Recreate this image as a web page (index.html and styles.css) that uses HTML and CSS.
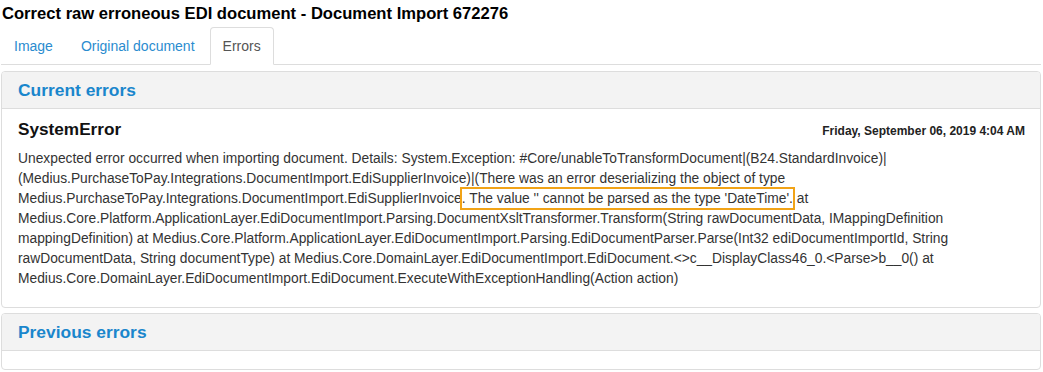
FILE: index.html
```html
<!DOCTYPE html>
<html>
<head>
<meta charset="utf-8">
<link rel="stylesheet" href="styles.css">
</head>
<body>
<div class="page">
  <h1 class="title">Correct raw erroneous EDI document - Document Import 672276</h1>
  <ul class="tabs">
    <li class="tab"><a>Image</a></li>
    <li class="tab"><a>Original document</a></li>
    <li class="tab active"><a>Errors</a></li>
  </ul>
  <div class="panel">
    <div class="panel-head">Current errors</div>
    <div class="panel-body">
      <div class="err-head">
        <span class="err-name">SystemError</span>
        <span class="err-date">Friday, September 06, 2019 4:04 AM</span>
      </div>
      <p class="err-text">Unexpected error occurred when importing document. Details: System.Exception: #Core/unableToTransformDocument|(B24.StandardInvoice)| (Medius.PurchaseToPay.Integrations.DocumentImport.EdiSupplierInvoice)|(There was an error deserializing the object of type Medius.PurchaseToPay.Integrations.DocumentImport.EdiSupplierInvoice<span class="hl">. The value '' cannot be parsed as the type 'DateTime'.</span> at Medius.Core.Platform.ApplicationLayer.EdiDocumentImport.Parsing.DocumentXsltTransformer.Transform(String rawDocumentData, IMappingDefinition mappingDefinition) at Medius.Core.Platform.ApplicationLayer.EdiDocumentImport.Parsing.EdiDocumentParser.Parse(Int32 ediDocumentImportId, String rawDocumentData, String documentType) at Medius.Core.DomainLayer.EdiDocumentImport.EdiDocument.&lt;&gt;c__DisplayClass46_0.&lt;Parse&gt;b__0() at Medius.Core.DomainLayer.EdiDocumentImport.EdiDocument.ExecuteWithExceptionHandling(Action action)</p>
    </div>
  </div>
  <div class="panel second">
    <div class="panel-head">Previous errors</div>
    <div class="panel-body empty"></div>
  </div>
</div>
</body>
</html>
```
FILE: styles.css
```css
html, body { margin: 0; padding: 0; background: #fff; }
body { font-family: "Liberation Sans", Arial, sans-serif; color: #333; }
.page { padding: 0 2px 0 1px; }
.title {
  margin: 0; padding: 2px 0 0 1px;
  font-size: 16.6px; line-height: 24px; font-weight: bold; color: #000;
}
.tabs {
  list-style: none; margin: 1px 0 0 0; padding: 0;
  display: flex; border-bottom: 1px solid #ddd;
}
.tab { margin-right: 2px; margin-bottom: -1px; }
.tab a {
  display: block; padding: 8px 12px; line-height: 20px; font-size: 14px;
  color: #2a8ccf; border: 1px solid transparent; border-radius: 4px 4px 0 0;
}
.tab.active a { color: #555; background: #fff; border-color: #ddd #ddd transparent #ddd; }
.panel {
  margin-top: 6px; border: 1px solid #ddd; border-radius: 4px; background: #fff;
}
.panel.second { margin-top: 5px; }
.panel-head {
  background: #f3f3f3; border-bottom: 1px solid #ddd; border-radius: 3px 3px 0 0;
  padding: 8px 16px; line-height: 20px; font-size: 17.4px; font-weight: bold; color: #1a86cc;
}
.panel-body { padding: 10px 15px 18px 16px; }
.panel-body.empty { padding: 0; height: 18px; }
.err-head { display: flex; justify-content: space-between; align-items: baseline; }
.err-name { font-size: 17.2px; font-weight: bold; color: #111; line-height: 20px; }
.err-date { font-size: 12px; font-weight: bold; color: #222; }
.err-text { margin: 10px 0 0 0; font-size: 13.8px; line-height: 20px; color: #333; }
.hl { outline: 2px solid #f1a317; outline-offset: 0; padding: 2px 0; }
```
